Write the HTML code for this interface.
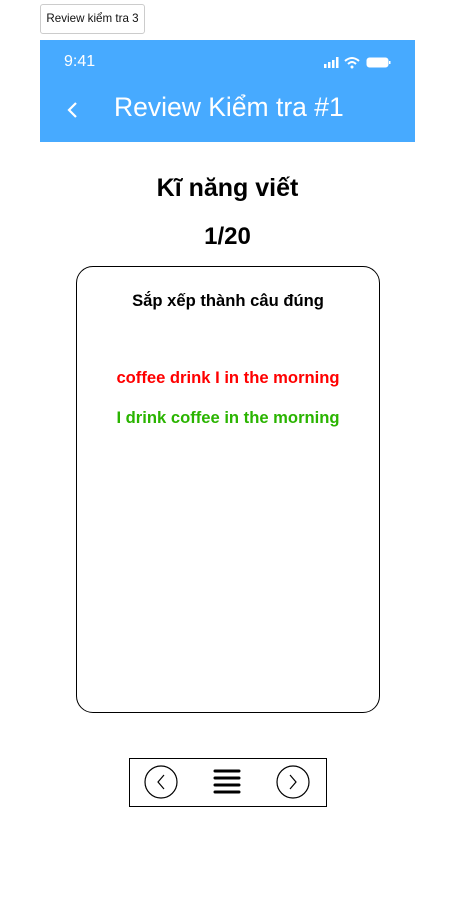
<!DOCTYPE html>
<html><head><meta charset="utf-8"><style>
body{margin:0;width:455px;height:924px;background:#fff;position:relative;font-family:"Liberation Sans",sans-serif;overflow:hidden}
.a{position:absolute}
</style></head><body>
<div class="a" style="left:40px;top:4px;width:103px;height:28px;border:1px solid #ccc;border-radius:3px;font-size:11.6px;line-height:28px;text-align:center;color:#111">Review kiểm tra 3</div>
<div class="a" style="left:40px;top:40px;width:375px;height:102px;background:#47aaff"></div>
<div class="a" style="left:64px;top:53px;color:#fff;font-size:16px">9:41</div>
<svg class="a" style="left:323px;top:56px" width="68" height="14">
<rect x="1" y="8" width="2.5" height="4" fill="#fff"/><rect x="5" y="6" width="2.5" height="6" fill="#fff"/><rect x="9" y="4" width="2.5" height="8" fill="#fff"/><rect x="13" y="1" width="2.5" height="11" fill="#fff"/>
<path d="M22 5 Q29 -1 36 5" stroke="#fff" stroke-width="2" fill="none"/><path d="M25 8 Q29 4 33 8" stroke="#fff" stroke-width="2" fill="none"/><circle cx="29" cy="11" r="1.5" fill="#fff"/>
<rect x="44" y="2" width="21" height="9" rx="2.5" fill="#fff" stroke="#fff"/><rect x="66" y="5" width="1.5" height="3" fill="#fff"/>
</svg>
<svg class="a" style="left:66px;top:101px" width="14" height="18"><path d="M10 2 L3 9 L10 16" stroke="#fff" stroke-width="2.2" fill="none"/></svg>
<div class="a" style="left:114px;top:92px;color:#fff;font-size:26.5px">Review Kiểm tra #1</div>
<div class="a" style="left:0;width:455px;top:174px;text-align:center;font-size:25px;font-weight:bold">Kĩ năng viết</div>
<div class="a" style="left:0;width:455px;top:223px;text-align:center;font-size:24px;font-weight:bold">1/20</div>
<div class="a" style="left:76px;top:266px;width:302px;height:445px;border:1px solid #000;border-radius:17px"></div>
<div class="a" style="left:76px;width:304px;top:291px;text-align:center;font-size:16.6px;font-weight:bold">Sắp xếp thành câu đúng</div>
<div class="a" style="left:76px;width:304px;top:368px;text-align:center;font-size:16.6px;font-weight:bold;color:#f00">coffee drink I in the morning</div>
<div class="a" style="left:76px;width:304px;top:408px;text-align:center;font-size:16.6px;font-weight:bold;color:#2ab400">I drink coffee in the morning</div>
<div class="a" style="left:129px;top:758px;width:196px;height:47px;border:1px solid #000"></div>
<svg class="a" style="left:129px;top:758px" width="198" height="49">
<circle cx="32" cy="24" r="16" stroke="#000" stroke-width="1.2" fill="none"/><path d="M35 17 L29 24 L35 31" stroke="#000" stroke-width="1.2" fill="none"/>
<circle cx="164" cy="24" r="16" stroke="#000" stroke-width="1.2" fill="none"/><path d="M161 17 L167 24 L161 31" stroke="#000" stroke-width="1.2" fill="none"/>
<g stroke="#000" stroke-width="3" stroke-linecap="round"><line x1="86" y1="13" x2="110" y2="13"/><line x1="86" y1="20" x2="110" y2="20"/><line x1="86" y1="27" x2="110" y2="27"/><line x1="86" y1="34" x2="110" y2="34"/></g>
</svg>
</body></html>
